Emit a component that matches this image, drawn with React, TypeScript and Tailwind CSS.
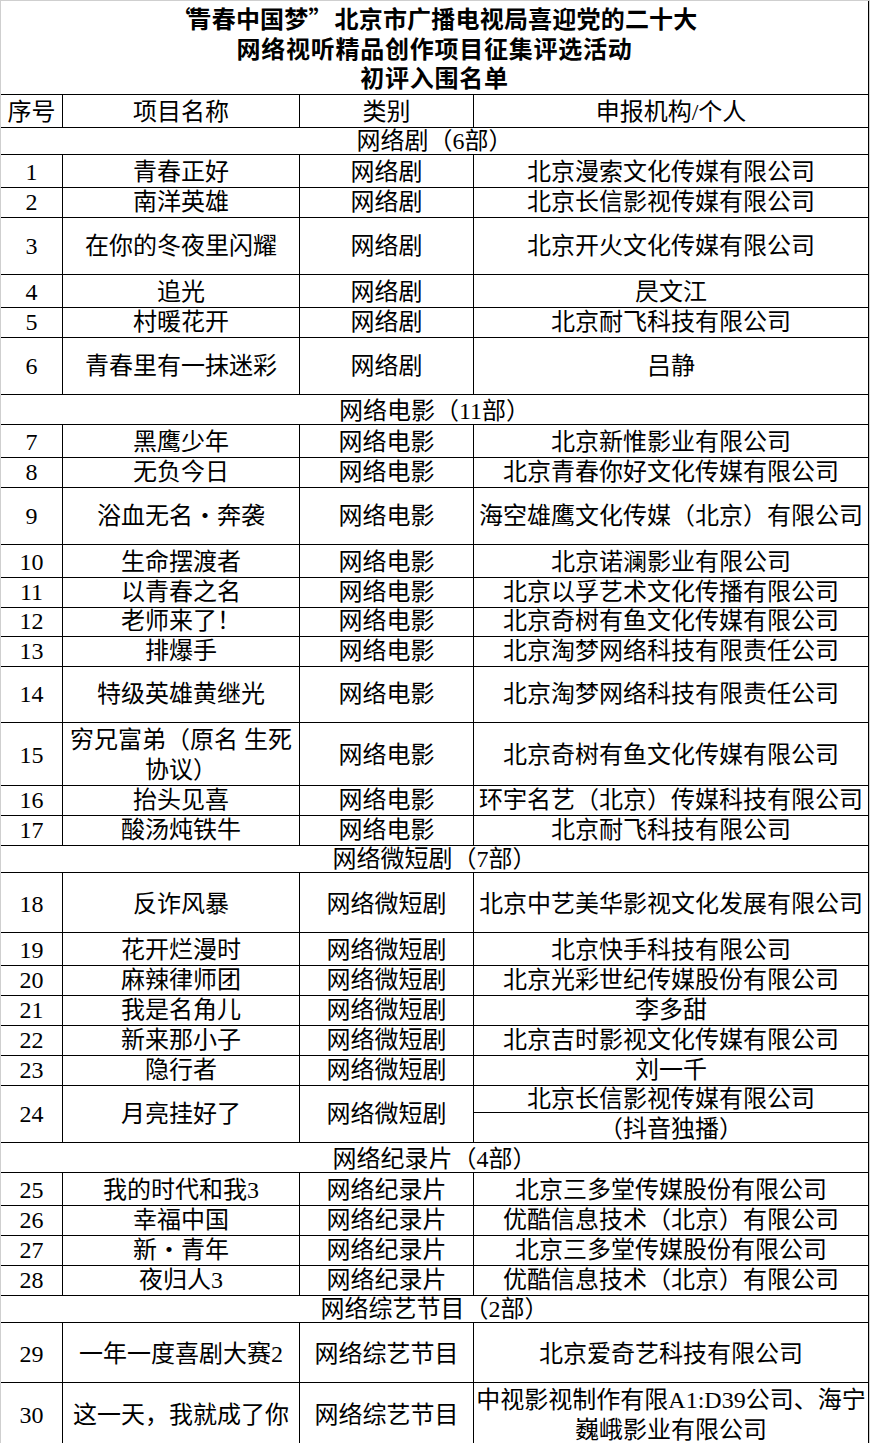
import React from 'react';

interface Entry {
  no: number;
  name: React.ReactNode;
  org: React.ReactNode;
  h?: number;
  split?: [string, string];
}

interface Section {
  title: string;
  type: string;
  rows: Entry[];
}

const sections: Section[] = [
  {
    title: '网络剧（6部）',
    type: '网络剧',
    rows: [
      { no: 1, name: '青春正好', org: '北京漫索文化传媒有限公司' },
      { no: 2, name: '南洋英雄', org: '北京长信影视传媒有限公司' },
      { no: 3, name: '在你的冬夜里闪耀', org: '北京开火文化传媒有限公司', h: 60 },
      { no: 4, name: '追光', org: '昃文江' },
      { no: 5, name: '村暖花开', org: '北京耐飞科技有限公司' },
      { no: 6, name: '青春里有一抹迷彩', org: '吕静', h: 60 },
    ],
  },
  {
    title: '网络电影（11部）',
    type: '网络电影',
    rows: [
      { no: 7, name: '黑鹰少年', org: '北京新惟影业有限公司' },
      { no: 8, name: '无负今日', org: '北京青春你好文化传媒有限公司' },
      { no: 9, name: '浴血无名・奔袭', org: '海空雄鹰文化传媒（北京）有限公司', h: 60 },
      { no: 10, name: '生命摆渡者', org: '北京诺澜影业有限公司' },
      { no: 11, name: '以青春之名', org: '北京以孚艺术文化传播有限公司', h: 29 },
      { no: 12, name: '老师来了！', org: '北京奇树有鱼文化传媒有限公司' },
      { no: 13, name: '排爆手', org: '北京淘梦网络科技有限责任公司', h: 29 },
      { no: 14, name: '特级英雄黄继光', org: '北京淘梦网络科技有限责任公司', h: 60 },
      {
        no: 15,
        name: (
          <>
            穷兄富弟（原名 生死
            <br />
            协议）
          </>
        ),
        org: '北京奇树有鱼文化传媒有限公司',
        h: 60,
      },
      { no: 16, name: '抬头见喜', org: '环宇名艺（北京）传媒科技有限公司' },
      { no: 17, name: '酸汤炖铁牛', org: '北京耐飞科技有限公司' },
    ],
  },
  {
    title: '网络微短剧（7部）',
    type: '网络微短剧',
    rows: [
      { no: 18, name: '反诈风暴', org: '北京中艺美华影视文化发展有限公司', h: 60 },
      { no: 19, name: '花开烂漫时', org: '北京快手科技有限公司' },
      { no: 20, name: '麻辣律师团', org: '北京光彩世纪传媒股份有限公司' },
      { no: 21, name: '我是名角儿', org: '李多甜' },
      { no: 22, name: '新来那小子', org: '北京吉时影视文化传媒有限公司' },
      { no: 23, name: '隐行者', org: '刘一千' },
      { no: 24, name: '月亮挂好了', org: '', h: 60, split: ['北京长信影视传媒有限公司', '（抖音独播）'] },
    ],
  },
  {
    title: '网络纪录片（4部）',
    type: '网络纪录片',
    rows: [
      { no: 25, name: '我的时代和我3', org: '北京三多堂传媒股份有限公司' },
      { no: 26, name: '幸福中国', org: '优酷信息技术（北京）有限公司' },
      { no: 27, name: '新・青年', org: '北京三多堂传媒股份有限公司' },
      { no: 28, name: '夜归人3', org: '优酷信息技术（北京）有限公司' },
    ],
  },
  {
    title: '网络综艺节目（2部）',
    type: '网络综艺节目',
    rows: [
      { no: 29, name: '一年一度喜剧大赛2', org: '北京爱奇艺科技有限公司', h: 60 },
      {
        no: 30,
        name: '这一天，我就成了你',
        org: (
          <>
            中视影视制作有限A1:D39公司、海宁
            <br />
            巍峨影业有限公司
          </>
        ),
        h: 60,
      },
    ],
  },
];

// shared cell look: black grid lines on the right and bottom
const cell = 'flex items-center justify-center text-center border-r border-b border-black pt-[2px]';
const cols = 'grid grid-cols-[62px_237px_174px_395px]';

const Row: React.FC<{ entry: Entry; type: string }> = ({ entry, type }) => {
  const h = entry.h ?? 30;
  return (
    <div className={cols} style={{ height: h }}>
      <div className={cell}>{entry.no}</div>
      <div className={cell}>{entry.name}</div>
      <div className={cell}>{type}</div>
      {entry.split ? (
        <div className="flex flex-col">
          <div className={`${cell} h-[30px]`}>{entry.split[0]}</div>
          <div className={`${cell} h-[30px]`}>{entry.split[1]}</div>
        </div>
      ) : (
        <div className={cell}>{entry.org}</div>
      )}
    </div>
  );
};

export default function App() {
  return (
    <div
      lang="zh-CN"
      className="w-[870px] bg-white text-black border-l border-t border-r border-[#cfcfcf] font-['Liberation_Serif','Noto_Sans_CJK_SC',serif] text-[24px] leading-[30px]"
    >
      {/* Title */}
      <div className="h-[94px] flex flex-col items-center justify-center border-r border-b border-black font-['Noto_Sans_CJK_SC',sans-serif] font-bold text-[24px] tracking-[0.75px] leading-[29.5px]">
        <div className="tracking-[0.2px]">
          <span className="inline-block w-[16px] text-right">“</span>青春中国梦<span className="inline-block w-[26px] text-left">”</span>北京市广播电视局喜迎党的二十大
        </div>
        <div>网络视听精品创作项目征集评选活动</div>
        <div>初评入围名单</div>
      </div>

      {/* Header */}
      <div className={`${cols} h-[30px]`}>
        <div className={cell}>序号</div>
        <div className={cell}>项目名称</div>
        <div className={cell}>类别</div>
        <div className={cell}>申报机构/个人</div>
      </div>

      {sections.map((s) => (
        <React.Fragment key={s.title}>
          <div className={`${cell} h-[30px]`}>{s.title}</div>
          {s.rows.map((r) => (
            <Row key={r.no} entry={r} type={s.type} />
          ))}
        </React.Fragment>
      ))}
    </div>
  );
}
